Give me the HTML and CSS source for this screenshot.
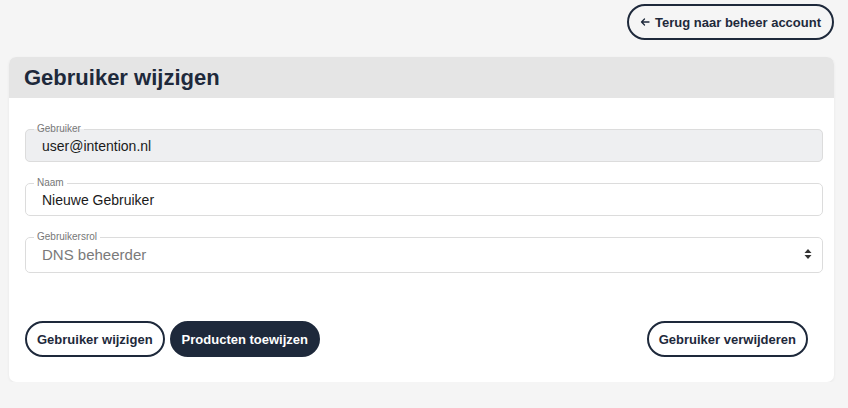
FILE: index.html
```html
<!DOCTYPE html>
<html lang="nl">
<head>
<meta charset="UTF-8">
<meta name="viewport" content="width=device-width, initial-scale=1.0">
<title>Gebruiker wijzigen</title>
<link rel="stylesheet" href="styles.css">
</head>
<body>
<div class="page">
    <div class="topbar">
        <a class="btn btn-outline btn-back" href="#">
            <svg class="arrow" width="10" height="10" viewBox="0 0 10 10" fill="none" stroke="currentColor" stroke-width="1.3" stroke-linecap="round" stroke-linejoin="round">
                <path d="M9 5H1.5M4.5 2L1.5 5L4.5 8"/>
            </svg>
            Terug naar beheer account
        </a>
    </div>

    <div class="card">
        <div class="card-header">
            <h2>Gebruiker wijzigen</h2>
        </div>
        <form class="card-body">
            <fieldset class="field field-disabled">
                <legend>Gebruiker</legend>
                <input type="text" value="user@intention.nl" disabled>
            </fieldset>
            <fieldset class="field">
                <legend>Naam</legend>
                <input type="text" value="Nieuwe Gebruiker">
            </fieldset>
            <fieldset class="field field-select">
                <legend>Gebruikersrol</legend>
                <div class="select">
                    <span>DNS beheerder</span>
                    <svg width="8" height="12" viewBox="0 0 8 12" fill="#333">
                        <path d="M4 1L7.5 5H0.5Z"/>
                        <path d="M4 11L7.5 7H0.5Z"/>
                    </svg>
                </div>
            </fieldset>

            <div class="actions">
                <div class="actions-left">
                    <button type="button" class="btn btn-outline">Gebruiker wijzigen</button>
                    <button type="button" class="btn btn-dark">Producten toewijzen</button>
                </div>
                <button type="button" class="btn btn-outline">Gebruiker verwijderen</button>
            </div>
        </form>
    </div>
</div>
</body>
</html>
```

FILE: styles.css
```css
body {
    font-family: "Liberation Sans", Arial, sans-serif;
    background-color: #f5f5f5;
    margin: 0;
    color: #1e293b;
}

.page {
    width: 825px;
    padding: 4px 0 0 9px;
}

.topbar {
    display: flex;
    justify-content: flex-end;
    margin-bottom: 17px;
}

.btn {
    display: inline-flex;
    align-items: center;
    justify-content: center;
    height: 36px;
    padding: 0 10px;
    border-radius: 18px;
    font-family: inherit;
    font-size: 13px;
    font-weight: bold;
    text-decoration: none;
    box-sizing: border-box;
    cursor: pointer;
}

.btn-outline {
    background-color: #fff;
    color: #1e293b;
    border: 2px solid #1e293b;
}

.btn-dark {
    background-color: #1e293b;
    color: #fff;
    border: 2px solid #1e293b;
    padding: 0 10px;
}

.btn-back {
    height: 36px;
    background-color: transparent;
    padding: 0 11px;
}

.arrow {
    margin-right: 5px;
}

.card {
    background-color: #fff;
    border-radius: 7px;
    overflow: hidden;
    box-shadow: 0px 1px 3px rgba(0, 0, 0, 0.06);
}

.card-header {
    background-color: #e5e5e5;
    height: 41px;
    display: flex;
    align-items: center;
    padding: 0 15px;
}

h2 {
    margin: 0;
    font-size: 22px;
    font-weight: bold;
    color: #1e293b;
}

.card-body {
    padding: 25px 11px 25px 16px;
}

.field {
    margin: 0 0 15px 0;
    padding: 0 16px;
    border: 1px solid #dcdcdc;
    border-radius: 5px;
    height: 39px;
    box-sizing: border-box;
    min-width: 0;
}

.field legend {
    font-size: 10px;
    color: #777;
    padding: 0 3px;
    margin-left: -8px;
    line-height: 12px;
}

.field input {
    width: 100%;
    border: none;
    outline: none;
    background: transparent;
    font-family: inherit;
    font-size: 14px;
    color: #1a1a1a;
    padding: 0;
    margin: 0;
    height: 26px;
    margin-top: -2px;
}

.field-disabled {
    background-color: #eeeff1;
}

.field-disabled input {
    color: #1a1a1a;
}

.field-select {
    height: 42px;
    padding-right: 10px;
}

.select {
    display: flex;
    justify-content: space-between;
    align-items: center;
    height: 30px;
    margin-top: -4px;
    font-size: 15px;
    color: #7a7a7a;
}

.actions {
    display: flex;
    justify-content: space-between;
    align-items: center;
    margin-top: 48px;
    padding-right: 15px;
}

.actions-left {
    display: flex;
    gap: 5px;
}
```
